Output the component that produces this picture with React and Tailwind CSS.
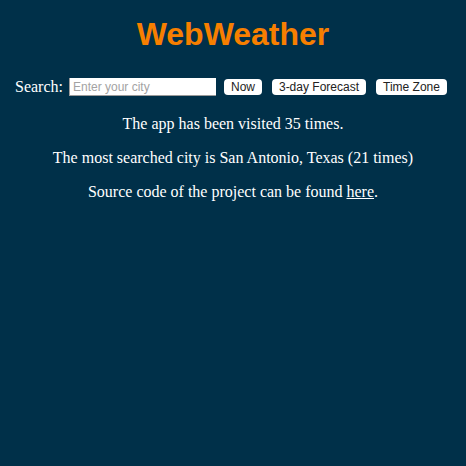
export default function App() {
  return (
    <div className="min-h-[466px] w-full bg-[#003049] pt-[16px] text-white">
      <h1 className="text-center font-['Liberation_Sans',Arial,sans-serif] text-[32px] font-bold leading-[37px] text-[#f77f00]">
        WebWeather
      </h1>
      <div className="mt-[24px] flex h-[20px] items-center justify-center pr-[4px] font-['Liberation_Serif','Times_New_Roman',serif] text-[16px] leading-[18px]">
        <span className="mr-[6px]">Search:</span>
        <input
          type="text"
          placeholder="Enter your city"
          className="h-[18px] w-[147px] border-l border-b border-[#9a9a9a] bg-white px-[3px] font-['Liberation_Sans',Arial,sans-serif] text-[12px] text-black outline-none placeholder:text-[#a3a3a3]"
        />
        <button className="ml-[8px] h-[16px] w-[38px] rounded-[4px] bg-white font-['Liberation_Sans',Arial,sans-serif] text-[12px] leading-[16px] text-[#222]">
          Now
        </button>
        <button className="ml-[10px] h-[16px] w-[94px] rounded-[4px] bg-white font-['Liberation_Sans',Arial,sans-serif] text-[12px] leading-[16px] text-[#222]">
          3-day Forecast
        </button>
        <button className="ml-[10px] h-[16px] w-[71px] rounded-[4px] bg-white font-['Liberation_Sans',Arial,sans-serif] text-[12px] leading-[16px] text-[#222]">
          Time Zone
        </button>
      </div>
      <div className="mt-[18px] flex flex-col gap-[16px] text-center font-['Liberation_Serif','Times_New_Roman',serif] text-[16px] leading-[18px]">
        <p>The app has been visited 35 times.</p>
        <p>The most searched city is San Antonio, Texas (21 times)</p>
        <p>
          Source code of the project can be found <a href="#" className="underline">here</a>.
        </p>
      </div>
    </div>
  );
}
